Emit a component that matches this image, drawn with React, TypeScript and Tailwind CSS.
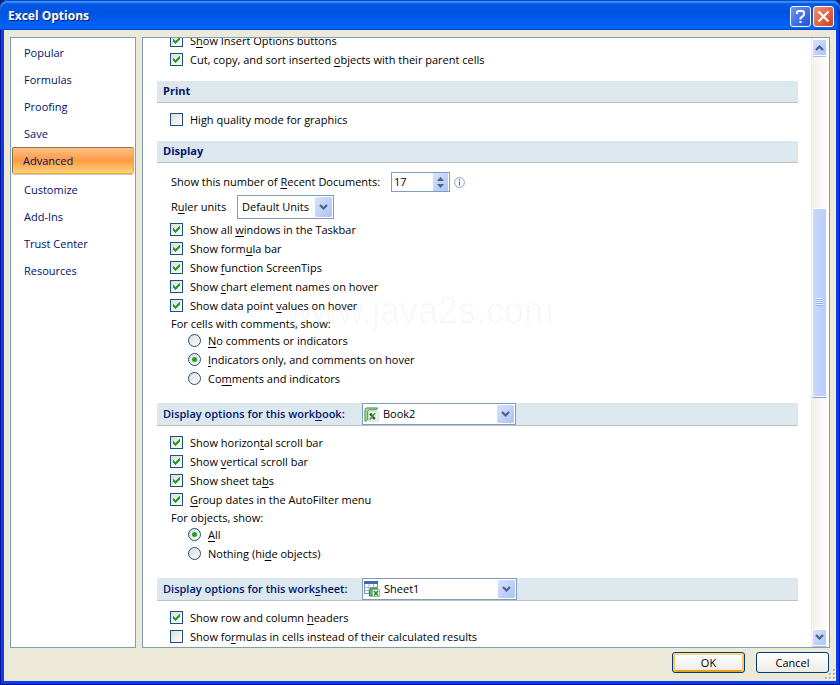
import { useState } from "react";
import type { ReactNode } from "react";

const navItems = [
  "Popular",
  "Formulas",
  "Proofing",
  "Save",
  "Advanced",
  "Customize",
  "Add-Ins",
  "Trust Center",
  "Resources",
];

// "Show &formula" style captions: the letter after & is underlined
const Caption = ({ text }: { text: string }) => {
  const at = text.indexOf("&");
  if (at < 0) return <>{text}</>;
  return (
    <>
      {text.slice(0, at)}
      <span className="underline underline-offset-2">{text[at + 1]}</span>
      {text.slice(at + 2)}
    </>
  );
};

const Check = ({ text, on = false }: { text: string; on?: boolean }) => {
  const [checked, setChecked] = useState(on);
  return (
    <label className="ml-[13px] flex h-[19px] items-center gap-[7px]">
      <span className="grid size-[13px] shrink-0">
        <input
          type="checkbox"
          checked={checked}
          onChange={() => setChecked(!checked)}
          className="col-start-1 row-start-1 size-[13px] appearance-none border border-[#1c5180] bg-linear-to-br from-[#dcdcd7] to-white"
        />
        {checked && (
          <svg
            viewBox="0 0 13 13"
            shapeRendering="crispEdges"
            className="pointer-events-none col-start-1 row-start-1 size-[13px]"
          >
            <path
              d="M3 5h1v3h-1zM4 6h1v3h-1zM5 7h1v3h-1zM6 6h1v3h-1zM7 5h1v3h-1zM8 4h1v3h-1zM9 3h1v3h-1z"
              fill="#21a121"
            />
          </svg>
        )}
      </span>
      <span>
        <Caption text={text} />
      </span>
    </label>
  );
};

const RadioGroup = ({
  title,
  name,
  options,
  initial,
}: {
  title: string;
  name: string;
  options: string[];
  initial: number;
}) => {
  const [value, setValue] = useState(initial);
  return (
    <fieldset>
      <legend className="ml-[14px] h-4 leading-[18px]">{title}</legend>
      {options.map((option, i) => (
        <label key={option} className="ml-[31px] flex h-[19px] items-center gap-[7px]">
          <span className="grid size-[13px] shrink-0 place-items-center">
            <input
              type="radio"
              name={name}
              checked={value === i}
              onChange={() => setValue(i)}
              className="col-start-1 row-start-1 size-[13px] appearance-none rounded-full border border-[#1c5180] bg-linear-to-br from-[#dcdcd7] to-white"
            />
            {value === i && (
              <span className="pointer-events-none col-start-1 row-start-1 size-[5px] rounded-full bg-[#21a121]" />
            )}
          </span>
          <span>
            <Caption text={option} />
          </span>
        </label>
      ))}
    </fieldset>
  );
};

const Chevron = ({ up = false }: { up?: boolean }) => (
  <svg viewBox="0 0 9 7" className={up ? "h-[7px] w-[9px] rotate-180" : "h-[7px] w-[9px]"}>
    <path d="M1 1l3.500 3.500L8 1" fill="none" stroke="#4d6185" strokeWidth="2.200" />
  </svg>
);

const DropDown = ({
  id,
  value,
  icon,
  className,
}: {
  id: string;
  value: string;
  icon?: ReactNode;
  className: string;
}) => (
  <span className={`flex items-center border border-[#7f9db9] bg-white ${className}`}>
    {icon}
    <select
      id={id}
      defaultValue={value}
      className="h-full min-w-0 flex-1 appearance-none bg-transparent pl-1 outline-none"
    >
      <option>{value}</option>
    </select>
    <span className="pointer-events-none mr-px flex w-[17px] items-center justify-center self-stretch rounded-xs border-y border-white bg-linear-to-br from-[#d6e1fd] to-[#adc3f7]">
      <Chevron />
    </span>
  </span>
);

const SectionHeader = ({
  title,
  htmlFor,
  children,
}: {
  title: string;
  htmlFor?: string;
  children?: ReactNode;
}) => (
  <div
    className={`flex items-center border-b border-[#c0c0c4] bg-[#dde7ee] pl-[6px] text-[#00156e] ${
      children ? "mt-[15px] h-[23px]" : "mt-3 h-[22px] pb-px"
    }`}
  >
    {htmlFor ? (
      <label htmlFor={htmlFor} className="w-[199px] font-semibold">
        <Caption text={title} />
      </label>
    ) : (
      <h2 className="font-bold">{title}</h2>
    )}
    {children}
  </div>
);

const BookIcon = () => (
  <svg viewBox="0 0 16 16" className="ml-px size-[15px] shrink-0">
    <path d="M1 3Q1 1 3 1h11.500L13 3H6Q4 3 4 5v8l-1.500 2H1z" fill="#a9d6a3" stroke="#3b8f3b" />
    <path d="M5 4.500h10v10.500H5z" fill="#f4faf3" stroke="#ccd5cc" />
    <path d="M6.500 7l5 6" stroke="#1f6a2a" strokeWidth="2.600" />
    <path d="M12 6.500L6 13.500" stroke="#4ea14a" strokeWidth="1.800" />
  </svg>
);

const SheetIcon = () => (
  <svg viewBox="0 0 16 16" className="ml-px size-4 shrink-0">
    <path d="M.5.5h13v12H.5z" fill="#fff" stroke="#6b8fca" />
    <path d="M0 0h14v3H0z" fill="#3b68b5" />
    <path d="M.5 6.500h13M.5 9.500h13M5 3v10M9.500 3v10" stroke="#9cb6e0" />
    <path d="M5.500 15V9.500Q5.500 7 8 7h5v2H8.500v6z" fill="#5fae5a" stroke="#2f8a35" />
    <path d="M8.500 8.500h7v7h-7z" fill="#f4faf3" stroke="#8dbb8a" />
    <path d="M10 10l4 4.500M14 10l-4 4.500" stroke="#2c8030" strokeWidth="1.600" />
  </svg>
);

const scrollButton =
  "flex h-[17px] w-full items-center justify-center rounded-xs border border-white bg-linear-to-br from-[#d6e1fd] to-[#adc3f7] shadow-[0_1px_0_#a9bde4]";

const ScrollBar = () => (
  <div className="flex w-[17px] shrink-0 flex-col border-l border-[#eeede5] bg-linear-to-r from-[#f3f1ec] to-[#fefefb] py-px pr-px">
    <button type="button" aria-label="Scroll up" className={scrollButton}>
      <Chevron up />
    </button>
    <div className="flex-[152]" />
    <div className="flex flex-[187] flex-col items-center justify-center gap-px rounded-xs border border-white bg-linear-to-r from-[#c9d8fc] to-[#b9cdfa] shadow-[0_1px_0_#7f9fd8]">
      {[0, 1, 2, 3].map((n) => (
        <span key={n} className="h-px w-[7px] bg-[#8cb0f8] shadow-[0_-1px_0_#eef4fe]" />
      ))}
    </div>
    <div className="flex-[232]" />
    <button type="button" aria-label="Scroll down" className={scrollButton}>
      <Chevron />
    </button>
  </div>
);

const App = () => {
  const [page, setPage] = useState("Advanced");

  return (
    <div className="flex h-screen flex-col bg-[#0a246a] font-['Open_Sans',sans-serif] text-[11px] leading-4 text-black">
      <header className="flex h-[30px] shrink-0 items-center rounded-t-lg bg-linear-to-b from-[#0a5be8] via-[#0053e1] via-40% to-[#0066ff] pt-[2px] pr-[6px] pl-2 shadow-[inset_0_1px_0_#0a4fc4,inset_0_3px_1px_#3b8cfb,inset_0_-1px_0_#0045d0,inset_-2px_0_2px_#0031b0]">
        <h1 className="flex-1 text-[12px] font-bold text-white [text-shadow:1px_1px_#0a1f7a]">
          Excel Options
        </h1>
        <div className="flex gap-[2px]">
          <button
            type="button"
            aria-label="Help"
            className="flex size-[21px] items-center justify-center rounded-[3px] border border-white bg-linear-to-br from-[#6d93f5] to-[#1f4fd8]"
          >
            <svg viewBox="0 0 13 15" className="h-[15px] w-[13px]">
              <path
                d="M3 5V3.500Q3 2 5 2h3q2 0 2 2v1q0 1-1 2L6.500 9v1.500"
                fill="none"
                stroke="#fff"
                strokeWidth="2"
              />
              <path d="M5.500 12h2v2h-2z" fill="#fff" />
            </svg>
          </button>
          <button
            type="button"
            aria-label="Close"
            className="flex size-[21px] items-center justify-center rounded-[3px] border border-white bg-linear-to-br from-[#f0906f] to-[#d13a10]"
          >
            <svg viewBox="0 0 13 13" className="size-[13px]">
              <path d="M1.500 1.500l10 10M11.500 1.500l-10 10" stroke="#fff" strokeWidth="2.200" />
            </svg>
          </button>
        </div>
      </header>

      <div className="flex min-h-0 flex-1 border-x border-b border-[#00109b]">
        <div className="relative flex min-w-0 flex-1 flex-col border-x-[3px] border-b-[3px] border-[#0a3fe8] bg-[#ece9d8] px-[6px] pt-[7px]">
          <div className="flex min-h-0 flex-1 gap-[6px]">
            <nav className="w-[126px] shrink-0 border border-[#7f9db9] bg-white px-px pt-px text-[#00106e]">
              {navItems.map((item) => (
                <button
                  key={item}
                  type="button"
                  onClick={() => setPage(item)}
                  className={
                    item === page
                      ? "mb-[2px] block h-[27px] w-full rounded-xs border border-[#8c7350] border-r-[#f0a830] border-b-[#f7a823] bg-linear-to-b from-[#fdc184] via-[#fd9a43] to-[#fed27c] pl-[10px] text-left shadow-[0_2px_0_-1px_#c8c8c8]"
                      : "block h-[27px] w-full pl-3 text-left"
                  }
                >
                  {item}
                </button>
              ))}
            </nav>

            <main className="flex min-w-0 flex-1 border border-[#7f9db9] bg-white pr-px">
              <div className="relative min-w-0 flex-1 overflow-hidden pr-[13px] pl-[14px]">
                {/* watermark */}
                <span className="pointer-events-none absolute top-[253px] left-[143px] font-['Liberation_Sans',sans-serif] text-[36px] leading-10 text-black/3">
                  www.java2s.com
                </span>

                <div className="-mt-[7px]">
                  <Check text="S&how Insert Options buttons" on />
                  <Check text="Cut, copy, and sort inserted &objects with their parent cells" on />
                </div>

                <SectionHeader title="Print" />
                <div className="pt-[7px]">
                  <Check text="High quality mode for graphics" />
                </div>

                <SectionHeader title="Display" />
                <div className="mt-[9px] flex h-5 items-center pl-[14px]">
                  <label htmlFor="recent" className="w-[220px]">
                    <Caption text="Show this number of &Recent Documents:" />
                  </label>
                  <span className="flex h-5 w-[59px] border border-[#7f9db9] bg-white">
                    <input
                      id="recent"
                      type="text"
                      defaultValue="17"
                      className="min-w-0 flex-1 pl-[2px] outline-none"
                    />
                    <span className="mr-px flex w-[15px] flex-col items-center justify-center gap-[3px] bg-linear-to-br from-[#d6e1fd] to-[#adc3f7]">
                      <svg viewBox="0 0 7 4" className="h-1 w-[7px]">
                        <path d="M0 4L3.500 0 7 4z" fill="#4d6185" />
                      </svg>
                      <svg viewBox="0 0 7 4" className="h-1 w-[7px]">
                        <path d="M0 0L3.500 4 7 0z" fill="#4d6185" />
                      </svg>
                    </span>
                  </span>
                  <svg viewBox="0 0 11 11" className="ml-1 size-[11px]">
                    <circle cx="5.500" cy="5.500" r="4.900" fill="#fff" stroke="#7fa3dc" />
                    <path d="M5 2h1v1.500H5zM5 4.500h1v4H5z" fill="#3f68b5" />
                  </svg>
                </div>
                <div className="mt-[3px] mb-px flex h-6 items-center pl-[14px]">
                  <label htmlFor="ruler" className="w-[66px]">
                    <Caption text="R&uler units" />
                  </label>
                  <DropDown id="ruler" value="Default Units" className="h-6 w-[97px]" />
                </div>
                <Check text="Show all &windows in the Taskbar" on />
                <Check text="Show form&ula bar" on />
                <Check text="Show &function ScreenTips" on />
                <Check text="Show &chart element names on hover" on />
                <Check text="Show data point &values on hover" on />
                <RadioGroup
                  title="For cells with comments, show:"
                  name="comments"
                  initial={1}
                  options={[
                    "&No comments or indicators",
                    "&Indicators only, and comments on hover",
                    "Co&mments and indicators",
                  ]}
                />

                <SectionHeader title="Display options for this work&book:" htmlFor="book">
                  <DropDown
                    id="book"
                    value="Book2"
                    icon={<BookIcon />}
                    className="h-[22px] w-[154px] text-black"
                  />
                </SectionHeader>
                <div className="pt-[7px]">
                  <Check text="Show horizon&tal scroll bar" on />
                  <Check text="Show &vertical scroll bar" on />
                  <Check text="Show sheet ta&bs" on />
                  <Check text="&Group dates in the AutoFilter menu" on />
                </div>
                <RadioGroup
                  title="For objects, show:"
                  name="objects"
                  initial={0}
                  options={["&All", "Nothing (hi&de objects)"]}
                />

                <SectionHeader title="Display options for this work&sheet:" htmlFor="sheet">
                  <DropDown
                    id="sheet"
                    value="Sheet1"
                    icon={<SheetIcon />}
                    className="h-[22px] w-[155px] text-black"
                  />
                </SectionHeader>
                <div className="pt-[7px]">
                  <Check text="Show row and column &headers" on />
                  <Check text="Show fo&rmulas in cells instead of their calculated results" />
                </div>
              </div>
              <ScrollBar />
            </main>
          </div>

          <footer className="flex shrink-0 justify-end gap-[11px] pt-1 pr-px pb-2">
            <button
              type="button"
              className="h-[21px] w-[73px] rounded-[3px] border border-[#003c74] bg-linear-to-b from-white to-[#ecebe5] shadow-[inset_0_2px_0_#fdd889,inset_2px_0_0_#fbc761,inset_-2px_0_0_#fbc761,inset_0_-2px_0_#e99f1c]"
            >
              OK
            </button>
            <button
              type="button"
              className="h-[21px] w-[73px] rounded-[3px] border border-[#003c74] bg-linear-to-b from-white to-[#ecebe5]"
            >
              Cancel
            </button>
          </footer>

          {/* resize grip */}
          <svg
            viewBox="0 0 11 11"
            shapeRendering="crispEdges"
            className="pointer-events-none absolute right-0 bottom-px size-[11px]"
          >
            <path
              d="M9 1h2v2H9zM5 5h2v2H5zM9 5h2v2H9zM1 9h2v2H1zM5 9h2v2H5zM9 9h2v2H9z"
              fill="#fff"
            />
            <path
              d="M8 0h2v2H8zM4 4h2v2H4zM8 4h2v2H8zM0 8h2v2H0zM4 8h2v2H4zM8 8h2v2H8z"
              fill="#b8b4a2"
            />
          </svg>
        </div>
      </div>
    </div>
  );
};

export default App;
